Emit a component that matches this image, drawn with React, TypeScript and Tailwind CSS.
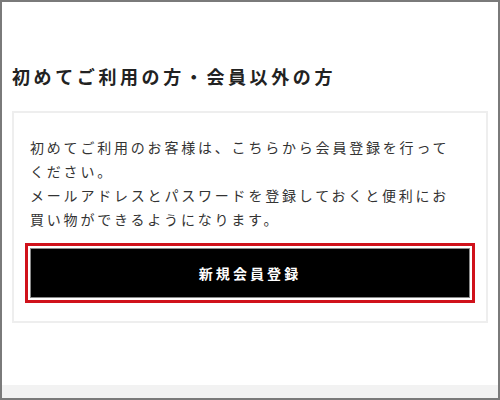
export default function App() {
  const font = { fontFamily: '"Noto Sans CJK JP", "Noto Sans", sans-serif' }

  return (
    <div
      className="w-[500px] h-[400px] border-2 border-[#7a7a7a] bg-white flex flex-col overflow-hidden"
      style={font}
    >
      <div className="px-[10px] pt-[60px]">
        <h2 className="text-[18px] leading-[28px] font-bold tracking-[0.2em] text-[#222]">
          初めてご利用の方・会員以外の方
        </h2>

        <div className="mt-[21px] w-[476px] border-2 border-[#eeeeee] px-[16px] pt-[22px] pb-[23px]">
          <p className="w-[430px] text-[14px] leading-[24px] tracking-[0.2em] text-[#333]">
            初めてご利用のお客様は、こちらから会員登録を行ってください。
            <br />
            メールアドレスとパスワードを登録しておくと便利にお買い物ができるようになります。
          </p>

          <button
            type="button"
            className="mt-[17px] w-[440px] h-[50px] bg-black border border-[#8a8a8a] outline-3 outline-offset-2 outline-[#d0121b] text-white text-[14px] font-bold tracking-[0.22em]"
          >
            新規会員登録
          </button>
        </div>
      </div>

      <div className="flex-1" />
      <div className="h-[13px] bg-[#f2f2f2]" />
    </div>
  )
}
